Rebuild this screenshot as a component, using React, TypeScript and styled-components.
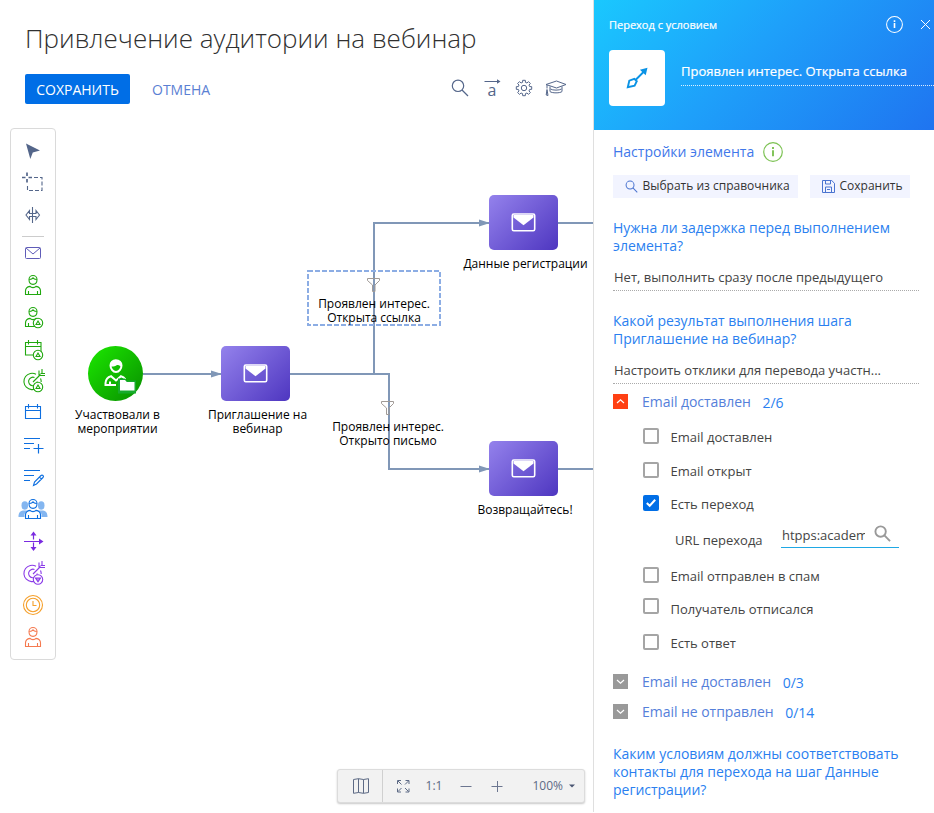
import React from "react";
import styled, { createGlobalStyle } from "styled-components";

const GlobalStyle = createGlobalStyle`
  *, *::before, *::after { box-sizing: border-box; }
  body {
    margin: 0;
    background: #fff;
    color: #444;
    font-family: "Open Sans", sans-serif;
    font-size: 13px;
  }
  svg { display: block; flex: none; }
`;

/* ---------- Page ---------- */

const Page = styled.div`
  display: flex;
  width: 100vw;
  height: 100vh;
  overflow: hidden;
`;

const Workspace = styled.main`
  flex: 1;
  min-width: 0;
  display: flex;
  flex-direction: column;
`;

const PageTitle = styled.h1`
  margin: 20px 0 0 25px;
  font-size: 26px;
  font-weight: 300;
  line-height: 36px;
  color: #303030;
  white-space: nowrap;
`;

const ActionBar = styled.div`
  display: flex;
  align-items: center;
  height: 30px;
  margin: 18px 21px 24px 25px;
`;

const ActionButton = styled.button<{ $primary?: boolean }>`
  height: 30px;
  width: ${(p) => (p.$primary ? "105px" : "auto")};
  margin: 0;
  padding: 1px 0 0;
  border: 0;
  border-radius: 2px;
  background: ${(p) => (p.$primary ? "#006ee6" : "transparent")};
  color: ${(p) => (p.$primary ? "#fff" : "#5b80d3")};
  font: 400 14px/28px "Open Sans", sans-serif;
  & + & { margin-left: 22px; }
`;

const HeaderIcons = styled.div`
  display: flex;
  align-items: center;
  gap: 8px;
  margin: -2px 0 0 auto;
  padding-right: 4px;
`;

const Board = styled.div`
  flex: 1;
  min-height: 0;
  display: flex;
  align-items: flex-start;
`;

/* ---------- Palette ---------- */

const Palette = styled.div`
  flex: none;
  display: flex;
  flex-direction: column;
  align-items: center;
  width: 46px;
  margin-left: 10px;
  padding: 6px 0;
  border: 1px solid #dadada;
  border-radius: 4px;
`;

const PaletteDivider = styled.div`
  width: 22px;
  height: 1px;
  margin-top: 5px;
  background: #ccc;
`;

/* ---------- Diagram ---------- */

const Canvas = styled.div`
  position: relative;
  align-self: stretch;
  flex: 1;
  overflow: hidden;
`;

const Edges = styled.svg`
  position: absolute;
  inset: 0;
`;

const Node = styled.div<{ $x: number; $y: number; $round?: boolean }>`
  position: absolute;
  left: ${(p) => p.$x}px;
  top: ${(p) => p.$y}px;
  display: flex;
  align-items: center;
  justify-content: center;
  width: ${(p) => (p.$round ? 55 : 69)}px;
  height: 55px;
  border-radius: ${(p) => (p.$round ? "50%" : "5px")};
  background: ${(p) =>
    p.$round
      ? "linear-gradient(135deg, #1ae000 10%, #0a9600 90%)"
      : "linear-gradient(135deg, #9482ec 0%, #4e36c0 100%)"};
`;

const NodeLabel = styled.div<{ $x: number; $y: number }>`
  position: absolute;
  left: ${(p) => p.$x}px;
  top: ${(p) => p.$y}px;
  transform: translateX(-50%);
  font-size: 12px;
  line-height: 14px;
  text-align: center;
  white-space: pre;
  color: #000;
`;

const Selection = styled.svg`
  position: absolute;
  left: 251px;
  top: 142px;
`;

const ZoomBar = styled.div`
  position: absolute;
  right: 8px;
  bottom: 10px;
  display: flex;
  align-items: center;
  width: 248px;
  height: 34px;
  border: 1px solid #dcdcdc;
  border-radius: 3px;
  background: #f2f2f2;
  box-shadow: 0 1px 2px rgba(0, 0, 0, 0.22);
  color: #5d6a85;
  font-size: 12px;
`;

const MapButton = styled.div`
  display: flex;
  align-items: center;
  justify-content: center;
  width: 46px;
  height: 100%;
  padding-left: 2px;
  border-right: 1px solid #d0d0d0;
`;

const ZoomControls = styled.div`
  flex: 1;
  display: flex;
  align-items: center;
  padding: 0 9px 0 13px;
`;

const ZoomText = styled.span<{ $before: number; $after: number }>`
  margin-left: ${(p) => p.$before}px;
  margin-right: ${(p) => p.$after}px;
  line-height: 16px;
`;

/* ---------- Side panel ---------- */

const Panel = styled.aside`
  flex: none;
  width: 341px;
  height: 812px;
  border-left: 1px solid #dfdfdf;
  overflow: hidden;
`;

const PanelHeader = styled.header`
  height: 130px;
  background: linear-gradient(135deg, #1ac8fe 0%, #1ea0fa 45%, #1f74f0 100%);
  color: #fff;
`;

const PanelTopLine = styled.div`
  display: flex;
  align-items: center;
  height: 50px;
  padding: 0 3px 2px 15px;
  font-size: 11px;
  -webkit-text-stroke: 0.2px #fff;
`;

const TopLineIcons = styled.div`
  display: flex;
  align-items: center;
  gap: 17px;
  margin: 1px 0 0 auto;
`;

const ElementRow = styled.div`
  display: flex;
  padding-left: 15px;
`;

const ElementTile = styled.div`
  display: flex;
  align-items: center;
  justify-content: center;
  width: 56px;
  height: 56px;
  border-radius: 4px;
  background: #fff;
`;

const ElementName = styled.div`
  flex: 1;
  height: 36px;
  margin-left: 16px;
  padding-top: 12px;
  border-bottom: 1px dotted rgba(255, 255, 255, 0.85);
  line-height: 18px;
  white-space: nowrap;
  -webkit-text-stroke: 0.2px #fff;
`;

const PanelBody = styled.div`
  padding: 12px 15px 0 19px;
`;

const SettingsHeading = styled.div`
  display: flex;
  align-items: center;
  gap: 9px;
  height: 20px;
  font-size: 14px;
  line-height: 20px;
  color: #3f78ea;
`;

const ButtonRow = styled.div`
  display: flex;
  gap: 12px;
  margin: 13px 0 21px;
`;

const SoftButton = styled.button<{ $width: number }>`
  display: flex;
  align-items: center;
  gap: 5px;
  width: ${(p) => p.$width}px;
  height: 23px;
  margin: 0;
  padding: 0 0 1px 11.5px;
  border: 0;
  background: #f2f4ff;
  color: #333;
  font: 400 12px/20px "Open Sans", sans-serif;
  white-space: nowrap;
`;

const Question = styled.div<{ $before?: number }>`
  margin-top: ${(p) => p.$before ?? 0}px;
  font-size: 14px;
  line-height: 18px;
  letter-spacing: -0.02px;
  color: #2a7ff0;
  white-space: pre;
`;

const Value = styled.div<{ $after: number }>`
  height: 36px;
  margin-bottom: ${(p) => p.$after}px;
  padding: 13px 0 0 1px;
  border-bottom: 1px dotted #aaa;
  line-height: 18px;
  white-space: nowrap;
`;

const Group = styled.div`
  display: flex;
  align-items: center;
  height: 30px;
  font-size: 14px;
  line-height: 20px;
  white-space: nowrap;
`;

const Toggle = styled.span<{ $open?: boolean }>`
  display: flex;
  align-items: center;
  justify-content: center;
  width: 15px;
  height: 15px;
  margin: -1px 14px 0 0;
  background: ${(p) => (p.$open ? "#ff4013" : "#999")};
`;

const GroupName = styled.span`
  color: #5580da;
  letter-spacing: -0.04px;
`;

const GroupCount = styled.span`
  margin: 1px 0 0 11.5px;
  color: #2a7ff0;
`;

const Options = styled.div`
  margin: 3px 0 7px 30px;
`;

const Option = styled.div<{ $height: number }>`
  display: flex;
  align-items: center;
  gap: 11.5px;
  height: ${(p) => p.$height}px;
  line-height: 18px;
  white-space: nowrap;
`;

const CheckBox = styled.span<{ $checked?: boolean; $lift: number }>`
  display: flex;
  align-items: center;
  justify-content: center;
  width: 16px;
  height: 16px;
  margin-bottom: ${(p) => p.$lift * 2}px;
  border: ${(p) => (p.$checked ? "0" : "2px solid #a5a5a5")};
  border-radius: 2px;
  background: ${(p) => (p.$checked ? "#006ee6" : "#fff")};
`;

const UrlRow = styled.div`
  display: flex;
  align-items: center;
  height: 40px;
  padding-left: 32px;
`;

const UrlLabel = styled.span`
  width: 106px;
  line-height: 18px;
`;

const UrlField = styled.div`
  display: flex;
  align-items: center;
  width: 118px;
  height: 25px;
  margin-top: -9px;
  padding-left: 1px;
  border-bottom: 1px solid #1fa8e4;
`;

const UrlValue = styled.span`
  width: 83px;
  margin-right: 9px;
  line-height: 20px;
  overflow: hidden;
  white-space: nowrap;
`;

const UrlLookup = styled.span`
  margin-top: -3px;
`;

/* ---------- Icons ---------- */

type PaletteKind =
  | "cursor" | "select" | "split" | "mail" | "person" | "personBadge"
  | "calendarBadge" | "targetBadge" | "calendar" | "listAdd" | "listEdit"
  | "group" | "cross" | "targetFilter" | "clock" | "contact";

const Person = () => (
  <>
    <path d="M12 10.500a4 4 0 0 1 8 0c0 2.800-1.600 4.900-4 4.900s-4-2.100-4-4.900zM12.700 10.500c1.600-.2 2.600-.8 3.300-1.700.7.9 1.700 1.500 3.300 1.700" />
    <path d="M8.500 25.500v-3.400c0-2.400 1.800-4.300 4.500-4.700 1.300 1.600 4.700 1.600 6 0 2.700.4 4.500 2.300 4.500 4.700v3.400zM11.500 25.500v-3.500M20.500 25.500v-3.500" />
  </>
);

const Badge = ({ y, color }: { y: number; color: string }) => (
  <>
    <circle cx="21" cy={y} r="4.700" fill="#fff" stroke={color} />
    <path d={`M21 ${y - 2}l2 3.500h-4z`} stroke={color} />
  </>
);

const CalendarShape = () => (
  <path d="M8.500 9.500h15.500v12.500H8.500zM8.500 13.500h15.500M11.500 7v4.500M20.500 7v4.500" />
);

const Target = () => (
  <>
    <path d="M19 9.200A8.200 8.200 0 1 0 20 23M23.500 13.500a8 8 0 0 1 .7 3.500" />
    <path d="M17.500 12.500a4.300 4.300 0 1 0 2.700 4M16 17l7.500-7.500M22 5.500v5h6M25 4v4.500M23.500 8.500h4.500" />
  </>
);

const paletteColors: Record<PaletteKind, string> = {
  cursor: "#54668a", select: "#54668a", split: "#54668a", mail: "#5f5cb8",
  person: "#21a80f", personBadge: "#21a80f", calendarBadge: "#21a80f", targetBadge: "#21a80f",
  calendar: "#0e6fe0", listAdd: "#0e6fe0", listEdit: "#0e6fe0", group: "#0e6fe0",
  cross: "#7a2be0", targetFilter: "#8a3be8", clock: "#f5a02c", contact: "#f57a50",
};

const paletteShapes: Record<PaletteKind, React.ReactNode> = {
  cursor: <path d="M9 8.500l14 7-7.200 2-2.500 6.500z" fill="#54668a" stroke="none" />,
  select: (
    <>
      <path d="M10 5.500v3.500M10 12v3.500M5 10.500h3.500M11.500 10.500H15" strokeWidth="1.700" />
      <path d="M17 10.500h8V23.500H10.500V17" strokeDasharray="4 2" />
    </>
  ),
  split: (
    <>
      <path d="M15.500 8v16" />
      <path d="M12.500 11.500L9 16l3.500 4.500v-3h6.500v3l3.500-4.500-3.500-4.500v3h-6.500z" />
    </>
  ),
  mail: <path d="M9.500 10.500h13a1 1 0 0 1 1 1v9a1 1 0 0 1-1 1h-13a1 1 0 0 1-1-1v-9a1 1 0 0 1 1-1zM9 11l7 6 7-6" strokeWidth="1" />,
  person: <Person />,
  personBadge: (<><Person /><Badge y={22} color="#21a80f" /></>),
  calendarBadge: (<><CalendarShape /><Badge y={22} color="#21a80f" /></>),
  targetBadge: (<><Target /><Badge y={22} color="#21a80f" /></>),
  calendar: <path d="M8.500 9.500h15v12h-15zM8.500 13.500h15M11.500 7v4.500M20.500 7v4.500" />,
  listAdd: <path d="M7 9.500h16M7 14.500h10M7 19.500h6M21.500 15v9.500M16.500 19.500h10" strokeWidth="1.200" />,
  listEdit: (
    <>
      <path d="M7 9.500h16M7 14.500h10M7 19.500h6" strokeWidth="1.200" />
      <path d="M16.500 24.500l1-3.500 6.500-6.500a1.200 1.200 0 0 1 2 2L19.500 23l-3 1.500zM22.500 16l2 2" />
    </>
  ),
  group: (
    <>
      <g fill="#84b6f0" stroke="none">
        <ellipse cx="7.800" cy="12.500" rx="3.300" ry="4.200" /><ellipse cx="24.200" cy="12.500" rx="3.300" ry="4.200" />
        <path d="M1.500 24c0-4 1.300-5.900 4.500-6.500h4L8 24zM30.500 24c0-4-1.300-5.900-4.500-6.500h-4L24 24z" />
        <path d="M7.500 26v-5l3.500-4 .3-7 4.700-4.200 4.700 4.200.3 7 3.500 4v5z" fill="#fff" />
      </g>
      <Person />
    </>
  ),
  cross: (
    <>
      <path d="M16.500 8.500v6M16.500 17.500v6M7 16.500h16" strokeWidth="1.200" />
      <path d="M16.500 6.500l3 4h-6zM16.500 26l3-4h-6zM26.500 16.500l-4.500-3v6z" fill="#7a2be0" stroke="none" />
    </>
  ),
  targetFilter: (
    <>
      <Target />
      <circle cx="21" cy="22.500" r="4.700" fill="#fff" />
      <path d="M18.500 21h5L21 24.700z" fill="#b98cf2" />
    </>
  ),
  clock: (
    <>
      <circle cx="16" cy="16" r="9.500" /><circle cx="16" cy="16" r="6.700" />
      <path d="M16 12v4.500h3.500" />
    </>
  ),
  contact: <Person />,
};

const PaletteIcon = ({ kind }: { kind: PaletteKind }) => (
  <svg width="32" height="32" viewBox="0 0 32 32" fill="none" stroke={paletteColors[kind]} strokeWidth="1.100">
    {paletteShapes[kind]}
  </svg>
);

const SearchIcon = ({ size, color, width }: { size: number; color: string; width: number }) => (
  <svg width={size} height={size} viewBox="0 0 18 18" fill="none" stroke={color} strokeWidth={width}>
    <circle cx="7" cy="7" r="5.500" />
    <path d="M11 11l6 6" />
  </svg>
);

const FormulaIcon = () => (
  <svg width="24" height="24" viewBox="0 0 24 24" fill="none" stroke="#54668a">
    <path d="M4.500 5.500h14" />
    <path d="M17 3.300l3.500 2.200L17 7.700z" fill="#54668a" stroke="none" />
    <text x="7.500" y="20" fontSize="16" fontFamily="Open Sans, sans-serif" fill="#54668a" stroke="none">a</text>
  </svg>
);

const gearPath = (() => {
  const points: string[] = [];
  for (let i = 0; i < 8; i++) {
    [[-0.25, 5.8], [-0.17, 7.8], [0.17, 7.8], [0.25, 5.8]].forEach(([offset, radius]) => {
      const angle = (i * Math.PI) / 4 + offset;
      points.push(`${(12 + radius * Math.sin(angle)).toFixed(2)} ${(12 - radius * Math.cos(angle)).toFixed(2)}`);
    });
  }
  return `M${points.join("L")}Z`;
})();

const GearIcon = () => (
  <svg width="24" height="24" viewBox="0 0 24 24" fill="none" stroke="#54668a" strokeLinejoin="round">
    <path d={gearPath} />
    <circle cx="12" cy="12" r="2.700" />
  </svg>
);

const AcademyIcon = () => (
  <svg width="24" height="24" viewBox="0 0 24 24" fill="none" stroke="#54668a" strokeLinejoin="round">
    <path d="M2 8.500L12.500 5 22 8.500 12.500 12zM3 9v3.500M3 13.500l-.8 5.500 1.800.5zM6 10.500v5c1.500 1.800 10.500 1.800 12 0v-5M6.500 13c2 1.500 9 1.500 11 0" />
  </svg>
);

const MailGlyph = () => (
  <svg width="25" height="19" viewBox="0 0 25 19" fill="none" stroke="#fff" strokeWidth="1.600">
    <rect x="1.300" y="1" width="22.400" height="16.800" rx="1.500" />
    <path d="M2.500 2h20v2.500l-10 7.700-10-7.700z" fill="#fff" stroke="none" />
  </svg>
);

const AudienceGlyph = () => (
  <svg width="40" height="40" viewBox="0 0 40 40" fill="none" stroke="#fff" strokeWidth="2">
    <path d="M14.500 11.500c0-3.300 2.300-5.300 5.300-5.300 3.500 0 5.700 2.300 5.700 5.300 0 3-2.300 6.600-5.500 6.600s-5.500-3.600-5.500-6.600z" />
    <path d="M14 12.500V10c1-4 9-5.500 11.500-.5V13c-1.500-1.500-3-2-4.500-2-2 1.800-4.500 1.500-7 1.500z" fill="#fff" stroke="none" />
    <path d="M20 31H9.500v-2c.3-3.800 2.500-6 5.500-6.800l5 4.300 5-4.300c2 .5 3.300 1.500 4.300 3M14 27.500V31" />
    <path d="M22 24.500h7l1.500 2H40v13H22z" fill="#17ab2c" stroke="none" />
    <path d="M24 26h5l1.800 2H38.500v8.500H24z" fill="#fff" stroke="none" />
  </svg>
);

const InfoIcon = ({ size, color }: { size: number; color: string }) => (
  <svg width={size} height={size} viewBox="0 0 20 20" fill="none" stroke={color} strokeWidth="1.200">
    <circle cx="10" cy="10" r="9.300" />
    <path d="M10 8.200v6M10 5v2" strokeWidth="1.900" />
  </svg>
);

const CloseIcon = () => (
  <svg width="11" height="11" viewBox="0 0 11 11" stroke="#fff">
    <path d="M1 1l9 9M10 1l-9 9" />
  </svg>
);

const FlowIcon = () => (
  <svg width="24" height="24" viewBox="0 0 24 24" fill="none" stroke="#0b93e5" strokeWidth="1.900">
    <path d="M2.800 21.200l1.500-6.500 5-1.800 2.500 2.300-2.200 4.500zM10.500 14L19 5.500" />
    <path d="M22.500 1.800l-1.800 7.500-5.800-5.500z" fill="#0b93e5" stroke="none" />
  </svg>
);

const SaveIcon = () => (
  <svg width="13" height="13" viewBox="0 0 13 13" fill="none" stroke="#4a74d0">
    <path d="M.5.5h9.200l2.800 2.800v9.200H.5zM3.500.5v3.500h5V.5M3.500 12.500v-5.500h6v5.500M5 9.500h3" />
  </svg>
);

const Chevron = ({ up }: { up?: boolean }) => (
  <svg width="9" height="9" viewBox="0 0 9 9" fill="none" stroke="#fff" strokeWidth="1.200">
    <path d={up ? "M1 6l3.500-3.200L8 6" : "M1 3l3.500 3.200L8 3"} />
  </svg>
);

const CheckMark = () => (
  <svg width="12" height="12" viewBox="0 0 12 12" fill="none" stroke="#fff" strokeWidth="2">
    <path d="M1.800 6l2.900 2.800 5.500-6" />
  </svg>
);

const MapIcon = () => (
  <svg width="18" height="16" viewBox="0 0 18 16" fill="none" stroke="#5d6a85">
    <path d="M1.500 1.500l5-.8 5 .8 5-.8v13.800l-5 .8-5-.8-5 .8zM6.500.7v13.800M11.500 1.500v13.800" />
  </svg>
);

const FitIcon = () => (
  <svg width="14" height="14" viewBox="0 0 14 14" fill="none" stroke="#5d6a85">
    <path d="M1.500 5V1.500h3.500M9.500 1.500H13V5M13 9.500V13H9.500M5 13H1.500V9.500M2 2l3.500 3.500M12.500 2L9 5.500M2 12.500L5.500 9M12.500 12.500L9 9" />
  </svg>
);

const MathSign = ({ plus }: { plus?: boolean }) => (
  <svg width="12" height="12" viewBox="0 0 12 12" stroke="#6c7690">
    <path d={plus ? "M.5 6.500h11M6.500 1v11" : "M.5 6.500h11"} />
  </svg>
);

/* ---------- Data ---------- */

const nodes = [
  { x: 165, y: 218, label: "Приглашение на\nвебинар", lx: 201.5, ly: 280 },
  { x: 433, y: 67, label: "Данные регистрации", lx: 469.5, ly: 129 },
  { x: 433, y: 313, label: "Возвращайтесь!", lx: 469, ly: 375 },
];

const elements: PaletteKind[] = [
  "mail", "person", "personBadge", "calendarBadge", "targetBadge", "calendar", "listAdd",
  "listEdit", "group", "cross", "targetFilter", "clock", "contact",
];

export default function App() {
  return (
    <Page>
      <GlobalStyle />
      <Workspace>
        <PageTitle>Привлечение аудитории на вебинар</PageTitle>
        <ActionBar>
          <ActionButton $primary>СОХРАНИТЬ</ActionButton>
          <ActionButton>ОТМЕНА</ActionButton>
          <HeaderIcons>
            <svg width="24" height="24" viewBox="0 0 24 24" fill="none" stroke="#54668a" strokeWidth="1.200">
              <circle cx="10" cy="9.800" r="5.700" />
              <path d="M14 14l6 6" />
            </svg>
            <FormulaIcon />
            <GearIcon />
            <AcademyIcon />
          </HeaderIcons>
        </ActionBar>
        <Board>
          <Palette>
            <PaletteIcon kind="cursor" />
            <PaletteIcon kind="select" />
            <PaletteIcon kind="split" />
            <PaletteDivider />
            {elements.map((kind) => <PaletteIcon key={kind} kind={kind} />)}
          </Palette>
          <Canvas>
            <Edges width="537" height="685" viewBox="56 128 537 685" fill="none" stroke="#8097b7" strokeWidth="2">
              <path d="M143 374H221M290 374H389V469H489M374 374V223H489M558 223h36M558 469h36" />
              <path d="M211 370.500l11 3.500-11 3.500zM479 219.500l11 3.500-11 3.500zM479 465.500l11 3.500-11 3.500z" fill="#8097b7" stroke="none" />
              <g stroke="#a09a96" strokeWidth="1">
                <path d="M367.500 278.500h12v2l-4.500 4.500v6.500h-2.500V285l-5-4.500z" />
                <path d="M381.500 401.500h12v2l-4.500 4.500v6.500h-2.500V408l-5-4.500z" />
              </g>
            </Edges>
            <Selection width="134" height="56" fill="none" stroke="#8cade4" strokeWidth="2">
              <rect x="1" y="1" width="132" height="54" strokeDasharray="5 2" />
            </Selection>
            <Node $x={32} $y={218} $round><AudienceGlyph /></Node>
            <NodeLabel $x={61.5} $y={280}>{"Участвовали в\nмероприятии"}</NodeLabel>
            {nodes.map((n) => (
              <React.Fragment key={n.label}>
                <Node $x={n.x} $y={n.y}><MailGlyph /></Node>
                <NodeLabel $x={n.lx} $y={n.ly}>{n.label}</NodeLabel>
              </React.Fragment>
            ))}
            <NodeLabel $x={318} $y={169}>{"Проявлен интерес.\nОткрыта ссылка"}</NodeLabel>
            <NodeLabel $x={332} $y={292}>{"Проявлен интерес.\nОткрыто письмо"}</NodeLabel>
            <ZoomBar>
              <MapButton><MapIcon /></MapButton>
              <ZoomControls>
                <FitIcon />
                <ZoomText $before={16} $after={18}>1:1</ZoomText>
                <MathSign />
                <ZoomText $before={19} $after={29}><MathSign plus /></ZoomText>
                <ZoomText $before={0} $after={6}>100%</ZoomText>
                <svg width="6" height="4" viewBox="0 0 6 4"><path d="M0 .5h6L3 3.500z" fill="#4a5672" /></svg>
              </ZoomControls>
            </ZoomBar>
          </Canvas>
        </Board>
      </Workspace>

      <Panel>
        <PanelHeader>
          <PanelTopLine>
            Переход с условием
            <TopLineIcons>
              <InfoIcon size={17} color="#fff" />
              <CloseIcon />
            </TopLineIcons>
          </PanelTopLine>
          <ElementRow>
            <ElementTile><FlowIcon /></ElementTile>
            <ElementName>Проявлен интерес. Открыта ссылка</ElementName>
          </ElementRow>
        </PanelHeader>
        <PanelBody>
          <SettingsHeading>
            Настройки элемента
            <InfoIcon size={20} color="#7dc254" />
          </SettingsHeading>
          <ButtonRow>
            <SoftButton $width={185}>
              <SearchIcon size={13} color="#4a74d0" width={1.4} />
              Выбрать из справочника
            </SoftButton>
            <SoftButton $width={100}>
              <SaveIcon />
              Сохранить
            </SoftButton>
          </ButtonRow>
          <Question>{"Нужна ли задержка перед выполнением\nэлемента?"}</Question>
          <Value $after={21}>Нет, выполнить сразу после предыдущего</Value>
          <Question>{"Какой результат выполнения шага\nПриглашение на вебинар?"}</Question>
          <Value $after={3}>Настроить отклики для перевода участн...</Value>
          <Group>
            <Toggle $open><Chevron up /></Toggle>
            <GroupName>Email доставлен</GroupName>
            <GroupCount>2/6</GroupCount>
          </Group>
          <Options>
            <Option $height={34}><CheckBox $lift={1} />Email доставлен</Option>
            <Option $height={34}><CheckBox $lift={1} />Email открыт</Option>
            <Option $height={32}><CheckBox $checked $lift={1}><CheckMark /></CheckBox>Есть переход</Option>
            <UrlRow>
              <UrlLabel>URL перехода</UrlLabel>
              <UrlField>
                <UrlValue>htpps:academ</UrlValue>
                <UrlLookup><SearchIcon size={17} color="#999" width={2} /></UrlLookup>
              </UrlField>
            </UrlRow>
            <Option $height={32}><CheckBox $lift={1} />Email отправлен в спам</Option>
            <Option $height={34}><CheckBox $lift={3} />Получатель отписался</Option>
            <Option $height={34}><CheckBox $lift={1} />Есть ответ</Option>
          </Options>
          <Group>
            <Toggle><Chevron /></Toggle>
            <GroupName>Email не доставлен</GroupName>
            <GroupCount>0/3</GroupCount>
          </Group>
          <Group>
            <Toggle><Chevron /></Toggle>
            <GroupName>Email не отправлен</GroupName>
            <GroupCount>0/14</GroupCount>
          </Group>
          <Question $before={18}>{"Каким условиям должны соответствовать\nконтакты для перехода на шаг Данные\nрегистрации?"}</Question>
        </PanelBody>
      </Panel>
    </Page>
  );
}
